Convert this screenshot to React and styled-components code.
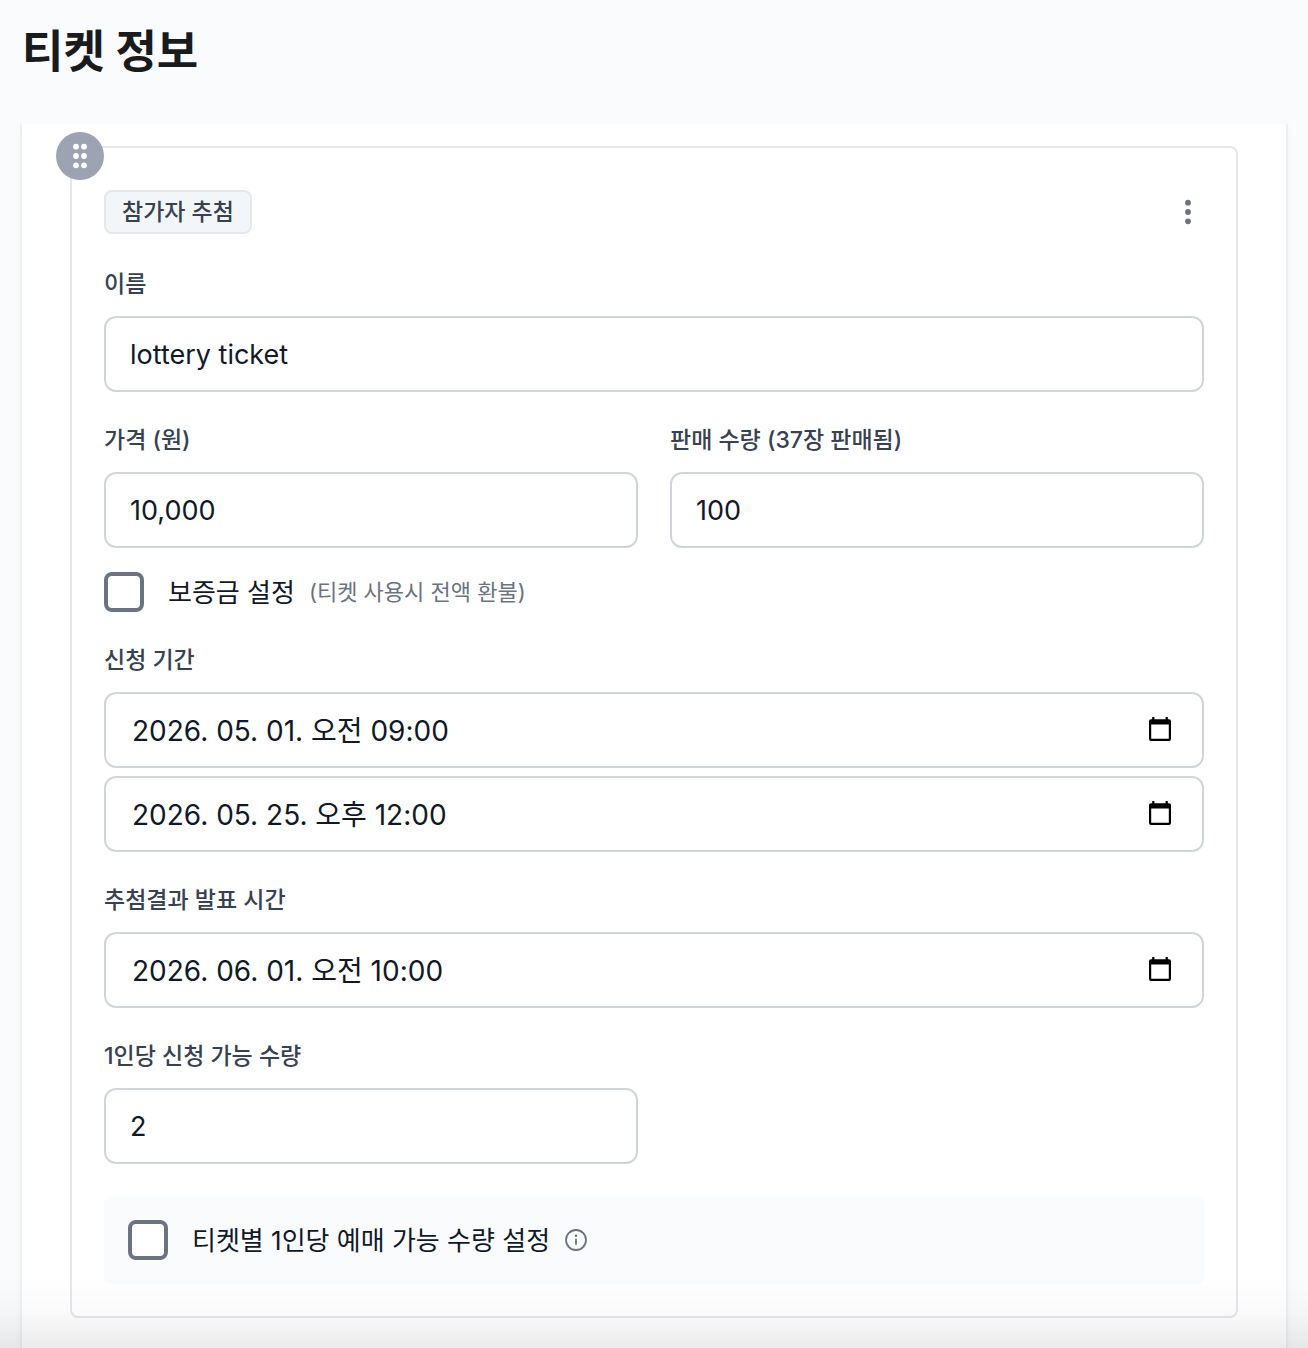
import React, { useState } from 'react';
import styled, { createGlobalStyle } from 'styled-components';

const GlobalStyle = createGlobalStyle`
    * {
        box-sizing: border-box;
    }

    body {
        margin: 0;
        background-color: #fafbfd;
        color: #111827;
        font-family: Inter, "Noto Sans CJK KR", sans-serif;
    }

    button, input {
        font-family: inherit;
        color: inherit;
    }
`;

const Page = styled.div`
    display: flex;
    flex-direction: column;
    min-height: 100vh;
`;

const Header = styled.header`
    position: relative;
    z-index: 1;
    padding: 18px 22px 38px;
    background-color: #fafbfd;
`;

const Title = styled.h1`
    margin: 0;
    font-size: 45px;
    line-height: 68px;
    font-weight: 700;
    color: #1a1b1c;
`;

const Panel = styled.main`
    flex: 1;
    margin: 0 20px;
    padding: 22px 48px 24px;
    background-color: #ffffff;
    border: solid #eff0f2;
    border-width: 0 2px;
    box-shadow: 0 2px 6px rgba(0, 0, 0, 0.04);
`;

const TicketCard = styled.form`
    position: relative;
    display: flex;
    flex-direction: column;
    gap: 32px;
    padding: 40px 32px 32px;
    border: 2px solid #e5e7eb;
    border-radius: 8px;
`;

const DragHandle = styled.button`
    position: absolute;
    top: -16px;
    left: -16px;
    width: 48px;
    height: 48px;
    padding: 0;
    border: 0;
    border-radius: 50%;
    background-color: #9ca3b3;
    cursor: grab;
`;

const CardHeader = styled.div`
    display: flex;
    align-items: center;
    justify-content: space-between;
    height: 48px;
`;

const Badge = styled.span`
    padding: 0 16px;
    border: 2px solid #e5e7eb;
    border-radius: 8px;
    background-color: #f3f6f8;
    color: #374151;
    font-size: 23px;
    line-height: 40px;
    font-weight: 500;
`;

const MenuButton = styled.button`
    width: 32px;
    height: 48px;
    padding: 0;
    border: 0;
    background: none;
    cursor: pointer;
`;

const Columns = styled.div`
    display: grid;
    grid-template-columns: 1fr 1fr;
    gap: 32px;
`;

const Group = styled.div`
    display: flex;
    flex-direction: column;
    gap: 24px;
`;

const Field = styled.div`
    display: flex;
    flex-direction: column;
    gap: 8px;
    min-width: 0;
`;

const Label = styled.label`
    margin-bottom: 8px;
    color: #374151;
    font-size: 23px;
    line-height: 32px;
    font-weight: 500;
`;

const InputBox = styled.div`
    display: flex;
    align-items: center;
    height: 76px;
    padding: 0 ${props => props.$date ? '26px' : '24px'};
    border: 2px solid #d1d5db;
    border-radius: 12px;
    background-color: #ffffff;

    &:focus-within {
        border-color: #6b7280;
    }
`;

const Input = styled.input`
    flex: 1;
    min-width: 0;
    padding: 2px 0 0;
    border: 0;
    outline: 0;
    background: none;
    font-size: ${props => props.$date ? '28px' : '27px'};
    line-height: 40px;
`;

const CalendarButton = styled.button`
    display: flex;
    padding: 0;
    border: 0;
    background: none;
    cursor: pointer;
`;

const CheckRow = styled.div`
    display: flex;
    align-items: center;
    height: 40px;
`;

const Checkbox = styled.input`
    appearance: none;
    width: 40px;
    height: 40px;
    margin: 0 24px 0 0;
    border: 4px solid #6b7280;
    border-radius: 8px;
    background-color: #ffffff;
    cursor: pointer;

    &:checked {
        background-color: #6b7280;
    }
`;

const CheckLabel = styled.label`
    padding-top: 2px;
    font-size: 26px;
    line-height: 40px;
`;

const Hint = styled.span`
    margin-left: 14px;
    color: #6b7280;
    font-size: 22px;
    line-height: 40px;
`;

const Notice = styled.div`
    padding: 24px;
    border-radius: 8px;
    background-color: #fafbfd;
`;

const InfoButton = styled.button`
    display: flex;
    margin-left: 14px;
    padding: 0;
    border: 0;
    background: none;
    cursor: pointer;
`;

const BottomFade = styled.div`
    position: fixed;
    right: 0;
    bottom: 0;
    left: 0;
    height: 72px;
    background: linear-gradient(to bottom, rgba(0, 0, 0, 0), rgba(0, 0, 0, 0.02) 50%, rgba(0, 0, 0, 0.08));
    pointer-events: none;
`;

const DragIcon = () => (
    <svg width="48" height="48" viewBox="0 0 48 48" fill="#ffffff">
        {[14.7, 24, 33.3].map(y => (
            <g key={y}>
                <circle cx="20" cy={y} r="2.9" />
                <circle cx="28" cy={y} r="2.9" />
            </g>
        ))}
    </svg>
);

const MoreIcon = () => (
    <svg width="32" height="48" viewBox="0 0 32 48" fill="#6b7280">
        <circle cx="16" cy="14.7" r="2.9" />
        <circle cx="16" cy="24" r="2.9" />
        <circle cx="16" cy="33.3" r="2.9" />
    </svg>
);

const CalendarIcon = () => (
    <svg width="32" height="32" viewBox="0 0 32 32">
        <path
            fill="#000000"
            fillRule="evenodd"
            d="M8.2 3h2.2v2.2h11.2V3h2.2v2.2H25a2 2 0 0 1 2 2V25a2 2 0 0 1-2 2H7a2 2 0 0 1-2-2V7.2a2 2 0 0 1 2-2h1.2zM7.2 10.4v14.4h17.6V10.4z"
        />
    </svg>
);

const InfoIcon = () => (
    <svg width="24" height="24" viewBox="0 0 24 24" fill="none" stroke="#6b7280" strokeWidth="1.8">
        <circle cx="12" cy="12" r="10" />
        <path d="M12 10.8v6" />
        <circle cx="12" cy="7.8" r="1.2" fill="#6b7280" stroke="none" />
    </svg>
);

const TextField = ({ id, label, value, onChange }) => (
    <Field>
        <Label htmlFor={id}>{label}</Label>
        <InputBox>
            <Input id={id} name={id} type="text" value={value} onChange={onChange} />
        </InputBox>
    </Field>
);

const DateInput = ({ id, label, value, onChange }) => (
    <InputBox $date>
        <Input $date id={id} name={id} type="text" aria-label={label} value={value} onChange={onChange} />
        <CalendarButton type="button" aria-label="날짜 선택">
            <CalendarIcon />
        </CalendarButton>
    </InputBox>
);

const App = () => {
    const [ticket, setTicket] = useState({
        name: 'lottery ticket',
        price: '10,000',
        quantity: '100',
        start: '2026. 05. 01. 오전 09:00',
        end: '2026. 05. 25. 오후 12:00',
        announce: '2026. 06. 01. 오전 10:00',
        limit: '2'
    });

    const handleChange = e => {
        setTicket({ ...ticket, [e.target.name]: e.target.value });
    };

    return (
        <Page>
            <GlobalStyle />
            <Header>
                <Title>티켓 정보</Title>
            </Header>
            <Panel>
                <TicketCard>
                    <DragHandle type="button" aria-label="순서 변경">
                        <DragIcon />
                    </DragHandle>
                    <CardHeader>
                        <Badge>참가자 추첨</Badge>
                        <MenuButton type="button" aria-label="더보기">
                            <MoreIcon />
                        </MenuButton>
                    </CardHeader>
                    <TextField id="name" label="이름" value={ticket.name} onChange={handleChange} />
                    <Group>
                        <Columns>
                            <TextField id="price" label="가격 (원)" value={ticket.price} onChange={handleChange} />
                            <TextField id="quantity" label="판매 수량 (37장 판매됨)" value={ticket.quantity} onChange={handleChange} />
                        </Columns>
                        <CheckRow>
                            <Checkbox id="deposit" type="checkbox" />
                            <CheckLabel htmlFor="deposit">보증금 설정</CheckLabel>
                            <Hint>(티켓 사용시 전액 환불)</Hint>
                        </CheckRow>
                    </Group>
                    <Field>
                        <Label htmlFor="start">신청 기간</Label>
                        <DateInput id="start" label="신청 기간 시작" value={ticket.start} onChange={handleChange} />
                        <DateInput id="end" label="신청 기간 종료" value={ticket.end} onChange={handleChange} />
                    </Field>
                    <Field>
                        <Label htmlFor="announce">추첨결과 발표 시간</Label>
                        <DateInput id="announce" label="추첨결과 발표 시간" value={ticket.announce} onChange={handleChange} />
                    </Field>
                    <Columns>
                        <TextField id="limit" label="1인당 신청 가능 수량" value={ticket.limit} onChange={handleChange} />
                    </Columns>
                    <Notice>
                        <CheckRow>
                            <Checkbox id="perTicket" type="checkbox" />
                            <CheckLabel htmlFor="perTicket">티켓별 1인당 예매 가능 수량 설정</CheckLabel>
                            <InfoButton type="button" aria-label="안내">
                                <InfoIcon />
                            </InfoButton>
                        </CheckRow>
                    </Notice>
                </TicketCard>
            </Panel>
            <BottomFade />
        </Page>
    );
};

export default App;
